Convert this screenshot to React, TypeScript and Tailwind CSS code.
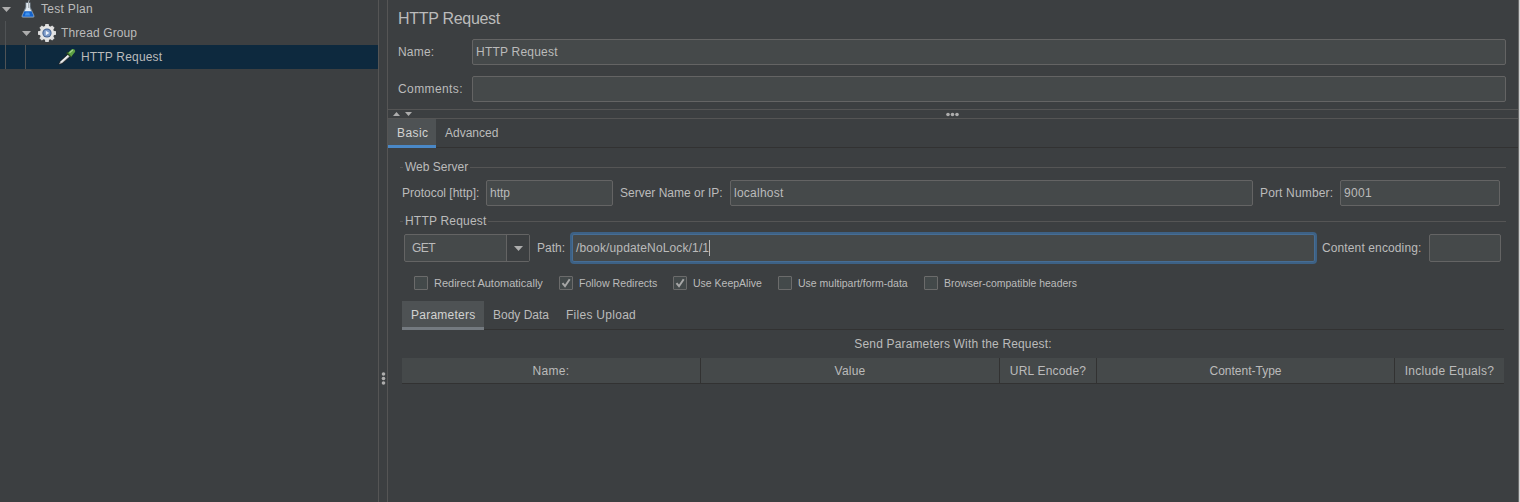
import React from "react";

const FONT = "font-['Liberation_Sans',Arial,sans-serif]";

function Label({ children, className = "" }: { children: React.ReactNode; className?: string }) {
  return <span className={`block shrink-0 whitespace-nowrap text-[12px] leading-[14px] ${className}`}>{children}</span>;
}

function Field({ className = "", children }: { className?: string; children?: React.ReactNode }) {
  return (
    <div className={`flex h-[26px] shrink-0 items-center rounded-[2px] border border-[#646464] bg-[#45494a] pl-[3px] ${className}`}>
      {children}
    </div>
  );
}

function Flask() {
  return (
    <svg width="16" height="20" viewBox="0 0 16 20" className="shrink-0">
      <path d="M5.500 3.500h5v4.500l3.700 8c.8 1.700.1 2.700-1.500 2.700H3.300c-1.600 0-2.300-1-1.500-2.700L5.500 8z" fill="#7f8d99" />
      <path d="M6.300 4h3.400v5l3.700 7.300c.4 1 .1 1.500-.7 1.500H3.300c-.8 0-1.100-.5-.7-1.500L6.300 9z" fill="#e3ebf2" />
      <path d="M4.400 12.300h7.200l1.900 4.200c.3.900 0 1.300-.9 1.300H3.400c-.9 0-1.200-.4-.9-1.300z" fill="#1463cb" />
      <path d="M5.800 13.500h3.500l.7 3H4.800z" fill="#3f92ee" />
      <path d="M8.500 9V3l1-3" stroke="#a9b0b5" fill="none" />
    </svg>
  );
}

function Gear() {
  return (
    <svg width="18" height="18" viewBox="0 0 18 18" className="shrink-0">
      {[0, 45, 90, 135, 180, 225, 270, 315].map((a) => (
        <path key={a} d="M7.300 0h3.400l.7 4H6.600z" fill="#dcdcdc" transform={`rotate(${a} 9 9)`} />
      ))}
      <circle cx="9" cy="9" r="7.200" fill="#e4e4e4" />
      <circle cx="9" cy="9" r="4.600" fill="#3f5f8e" />
      <circle cx="9" cy="9" r="3.600" fill="#7d9bc9" />
      <path d="M7.800 6.800L11.300 9l-3.500 2.200z" fill="#eef3fa" />
    </svg>
  );
}

function Pipette() {
  return (
    <svg width="20" height="18" viewBox="0 0 20 18" className="shrink-0">
      <path d="M1.200 17l1.300-3.500L11 5.500l3 2.800-8.500 7.500z" fill="#1f2325" />
      <path d="M2 16.300l1.400-2.800 8-7.300 1.900 1.700-8 7.200z" fill="#b9bdbf" />
      <path d="M4 14.200l8-7.200" stroke="#f0f2f2" strokeWidth="1.200" />
      <path d="M9.800 4.500l4.700 4.600" stroke="#2e4d22" strokeWidth="2" />
      <path d="M10.800 5l4-3.700c1.700-1.200 4.200.8 3.200 2.700l-3.600 4.400z" fill="#5da043" />
      <path d="M12.500 4.700l3.300-2.700" stroke="#a5d78a" strokeWidth="1.300" />
    </svg>
  );
}

function Caret({ className = "" }: { className?: string }) {
  return (
    <svg width="9" height="5" viewBox="0 0 9 5" className={`shrink-0 ${className}`}>
      <path d="M0 0h9L4.500 5z" fill="#adadad" />
    </svg>
  );
}

function Check({ label, checked, className, scale }: { label: string; checked?: boolean; className: string; scale: string }) {
  return (
    <div className={`flex shrink-0 items-center ${className}`}>
      <div className="flex size-[14px] shrink-0 items-center justify-center rounded-[1px] border border-[#6b6b6b] bg-[#43494a]">
        {checked && (
          <svg width="12" height="12" viewBox="0 0 12 12" className="shrink-0">
            <path d="M2.500 6.200l2.500 3L9.700 2.300" fill="none" stroke="#a7a7a7" strokeWidth="2" />
          </svg>
        )}
      </div>
      <span className={`ml-[6px] mt-px origin-left whitespace-nowrap text-[10px] leading-[13px] ${scale}`}>{label}</span>
    </div>
  );
}

function GroupTitle({ children, width }: { children: React.ReactNode; width: string }) {
  return (
    <div className="ml-[12px] mr-[12px] flex h-[14px] items-center">
      <div className="mt-px h-px w-[3px] bg-[#555555]" />
      <div className={`pl-[2px] ${width}`}>{children}</div>
      <div className="mt-px h-px flex-1 bg-[#555555]" />
    </div>
  );
}

function Dots({ vertical }: { vertical?: boolean }) {
  return (
    <svg width={vertical ? 5 : 13} height={vertical ? 13 : 5} className="shrink-0">
      {[2, 6.5, 11].map((p) => (
        <circle key={p} cx={vertical ? 2.5 : p} cy={vertical ? p : 2.5} r="1.800" fill="#adadad" />
      ))}
    </svg>
  );
}

export default function App() {
  return (
    <div className={`flex h-[502px] w-[1520px] overflow-hidden bg-[#3c3f41] text-[#bbbbbb] ${FONT}`}>
      <aside className="h-full w-[378px] shrink-0">
        <div className="-mt-[3px] flex h-[24px] items-center pl-[2px]">
          <Caret />
          <div className="ml-[9px]"><Flask /></div>
          <Label className="ml-[5px] tracking-[0.300px]">Test Plan</Label>
        </div>
        <div className="flex h-[24px] items-center">
          <div className="ml-[5px] h-full w-px bg-[#505355]" />
          <Caret className="ml-[16px]" />
          <div className="ml-[7px]"><Gear /></div>
          <Label className="ml-[5px] tracking-[0.120px]">Thread Group</Label>
        </div>
        <div className="flex h-[24px] items-center bg-[#0d293e]">
          <div className="ml-[5px] h-full w-px bg-[#505355]" />
          <div className="ml-[19px] h-full w-px bg-[#505355]" />
          <div className="ml-[31px]"><Pipette /></div>
          <Label className="ml-[4px] tracking-[0.180px]">HTTP Request</Label>
        </div>
      </aside>
      <div className="flex w-[10px] shrink-0 flex-col items-center border-x border-[#555555] pt-[372px]">
        <Dots vertical />
      </div>
      <main className="flex w-[1130px] shrink-0 flex-col">
        <div className="h-[109px] shrink-0 pl-[10px]">
          <div className="h-[39px] pt-[9px] text-[16px] leading-[20px] tracking-[-0.300px]">HTTP Request</div>
          <div className="flex items-center">
            <Label className="w-[74px] tracking-[0.200px]">Name:</Label>
            <Field className="w-[1034px]"><Label className="tracking-[0.220px]">HTTP Request</Label></Field>
          </div>
          <div className="mt-[11px] flex items-center">
            <Label className="w-[74px] tracking-[0.400px]">Comments:</Label>
            <Field className="w-[1034px]" />
          </div>
        </div>
        <div className="flex h-[10px] shrink-0 items-center border-y border-[#555555] pl-[5px]">
          <svg width="7" height="4" className="shrink-0"><path d="M0 4h7L3.500 0z" fill="#adadad" /></svg>
          <svg width="7" height="4" className="ml-[5px] shrink-0"><path d="M0 0h7L3.500 4z" fill="#adadad" /></svg>
          <div className="ml-[534px]"><Dots /></div>
        </div>
        <div className="flex h-[29px] shrink-0 items-stretch">
          <div className="w-[48px] border-b-[3px] border-[#4a88c7] bg-[#4e5254] pl-[9px] pt-[7px]">
            <Label className="tracking-[0.400px] text-[#d2d2d2]">Basic</Label>
          </div>
          <div className="flex-1 border-b border-[#323232] pl-[9px] pt-[7px]">
            <Label>Advanced</Label>
          </div>
        </div>
        <div className="mt-[12px] shrink-0">
          <GroupTitle width="w-[67px]"><Label>Web Server</Label></GroupTitle>
        </div>
        <div className="mt-[6px] flex shrink-0 items-center pl-[14px]">
          <Label className="w-[84px]">Protocol [http]:</Label>
          <Field className="w-[127px]"><Label>http</Label></Field>
          <Label className="ml-[7px] w-[110px]">Server Name or IP:</Label>
          <Field className="w-[523px]"><Label className="tracking-[0.250px]">localhost</Label></Field>
          <Label className="ml-[7px] w-[80px] tracking-[0.150px]">Port Number:</Label>
          <Field className="w-[160px]"><Label className="tracking-[0.330px]">9001</Label></Field>
        </div>
        <div className="mt-[8px] shrink-0">
          <GroupTitle width="w-[85px]"><Label className="tracking-[0.200px]">HTTP Request</Label></GroupTitle>
        </div>
        <div className="mt-[4px] flex h-[32px] shrink-0 items-center pl-[16px]">
          <div className="flex h-[28px] w-[126px] shrink-0 items-stretch rounded-[2px] border border-[#646464] bg-[#45494a]">
            <div className="flex w-[102px] items-center border-r border-[#646464] pl-[7px]">
              <Label className="tracking-[-0.500px]">GET</Label>
            </div>
            <div className="flex flex-1 items-center justify-center bg-[#3c3f41]"><Caret /></div>
          </div>
          <Label className="ml-[7px] w-[33px]">Path:</Label>
          <div className="flex h-[32px] w-[747px] shrink-0 items-center rounded-[4px] border-[2px] border-[#3d6185] bg-[#3d6185]">
            <div className="flex h-[28px] flex-1 items-center rounded-[2px] border border-[#466d94] bg-[#45494a] pl-[3px]">
              <Label className="tracking-[0.140px]">/book/updateNoLock/1/1</Label>
              <div className="h-[16px] w-px bg-[#bbbbbb]" />
            </div>
          </div>
          <Label className="ml-[5px] w-[107px] tracking-[0.120px]">Content encoding:</Label>
          <Field className="h-[28px] w-[72px]" />
        </div>
        <div className="mt-[12px] flex h-[14px] shrink-0 pl-[26px]">
          <Check className="w-[145px]" scale="scale-x-[1.1]" label="Redirect Automatically" />
          <Check className="w-[114px]" scale="scale-x-[1.06]" label="Follow Redirects" checked />
          <Check className="w-[105px]" scale="scale-x-[1.05]" label="Use KeepAlive" checked />
          <Check className="w-[146px]" scale="scale-x-[1.05]" label="Use multipart/form-data" />
          <Check className="w-[180px]" scale="scale-x-[1.045]" label="Browser-compatible headers" />
        </div>
        <div className="ml-[14px] mt-[11px] flex h-[29px] w-[1102px] shrink-0 items-stretch">
          <div className="w-[82px] border-b-[3px] border-[#747a80] bg-[#4e5254] pl-[9px] pt-[7px]">
            <Label className="tracking-[0.250px] text-[#d2d2d2]">Parameters</Label>
          </div>
          <div className="flex flex-1 border-b border-[#323232] pl-[9px] pt-[7px]">
            <Label className="w-[73px]">Body Data</Label>
            <Label className="tracking-[0.280px]">Files Upload</Label>
          </div>
        </div>
        <div className="ml-[14px] mt-[7px] flex h-[21px] w-[1102px] shrink-0 justify-center">
          <Label className="tracking-[0.160px]">Send Parameters With the Request:</Label>
        </div>
        <div className="ml-[14px] flex h-[26px] w-[1102px] shrink-0 border-b border-[#323232] bg-[#45494a]">
          <div className="flex w-[299px] items-center justify-center border-r border-[#323232]"><Label className="tracking-[0.300px]">Name:</Label></div>
          <div className="flex w-[299px] items-center justify-center border-r border-[#323232]"><Label className="tracking-[0.200px]">Value</Label></div>
          <div className="flex w-[97px] items-center justify-center border-r border-[#323232]"><Label className="tracking-[0.200px]">URL Encode?</Label></div>
          <div className="flex w-[298px] items-center justify-center border-r border-[#323232]"><Label>Content-Type</Label></div>
          <div className="flex flex-1 items-center justify-center"><Label className="tracking-[0.270px]">Include Equals?</Label></div>
        </div>
      </main>
      <div className="w-px shrink-0 bg-[#6b6b6b]" />
      <div className="w-px shrink-0 bg-[#d0d0d0]" />
    </div>
  );
}
